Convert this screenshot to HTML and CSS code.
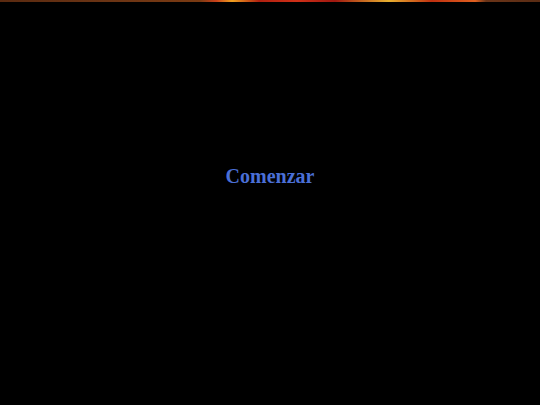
FILE: index.html
```html
<!DOCTYPE html>
<html>
<head>
<meta charset="utf-8">
<link rel="stylesheet" href="styles.css">
</head>
<body>
<div class="fire-bar"></div>
<main class="stage">
  <a class="start" href="#">Comenzar</a>
</main>
</body>
</html>
```
FILE: styles.css
```css
html, body {
  margin: 0;
  padding: 0;
  background: #000;
  height: 100%;
}
.fire-bar {
  height: 2px;
  background: linear-gradient(90deg,
    #5a2a10 0%, #6b3414 20%, #7a3a12 37%,
    #c8401a 40%, #f0a020 43%, #b02010 48%,
    #d03018 55%, #a01810 62%, #e8b030 72%,
    #c03010 80%, #e06020 88%, #6a3418 90%, #5a2c14 100%);
}
.stage {
  display: flex;
  justify-content: center;
  padding-top: 163px;
}
.start {
  font-family: "Liberation Serif", serif;
  font-weight: bold;
  font-size: 20px;
  color: #4a6fd6;
  text-decoration: none;
}
```
